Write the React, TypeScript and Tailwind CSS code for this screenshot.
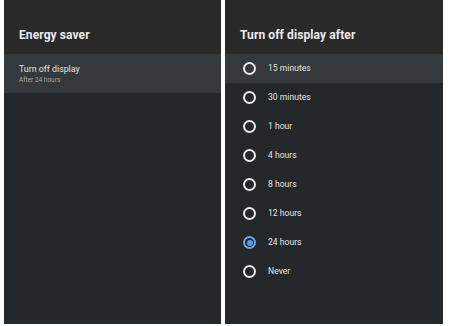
import React from "react";

const options = ["15 minutes", "30 minutes", "1 hour", "4 hours", "8 hours", "12 hours", "24 hours", "Never"];

function Radio({ checked }: { checked: boolean }) {
  if (checked) {
    return (
      <div className="w-[13px] h-[13px] rounded-full border-[2px] border-[#6aa8e4] flex items-center justify-center">
        <div className="w-[6px] h-[6px] rounded-full bg-[#5a9ee0]" />
      </div>
    );
  }
  return <div className="w-[13px] h-[13px] rounded-full border-[2px] border-[#e8e8e8]" />;
}

export default function App() {
  return (
    <div
      className="w-[453px] h-[326px] bg-white flex gap-[4px] pl-[4px] pb-[2px]"
      style={{ fontFamily: "Roboto, 'Noto Sans', sans-serif" }}
    >
      <div className="w-[217px] h-[324px] bg-[#25282b] flex flex-col">
        <div className="h-[54px] bg-[#292929] flex items-end pl-[15px] pb-[11px]">
          <span className="text-[12px] leading-[16px] font-bold text-[#ececec] tracking-[0.1px]">Energy saver</span>
        </div>
        <div className="h-[39px] bg-[#35393b] flex flex-col justify-center pl-[15px]">
          <span className="text-[8.8px] leading-[12px] text-[#e2e2e2]">Turn off display</span>
          <span className="text-[6.5px] leading-[10px] text-[#a4a6a8]">After 24 hours</span>
        </div>
        <div className="flex-1" />
      </div>
      <div className="w-[218px] h-[324px] bg-[#25282b] flex flex-col">
        <div className="h-[54px] bg-[#292929] flex items-end pl-[15px] pb-[11px]">
          <span className="text-[12px] leading-[16px] font-bold text-[#ececec] tracking-[0.1px]">Turn off display after</span>
        </div>
        {options.map((o, i) => (
          <div
            key={o}
            className={`h-[29px] flex items-center pl-[18px] gap-[12px] ${i === 0 ? "bg-[#35393b]" : ""}`}
          >
            <Radio checked={o === "24 hours"} />
            <span className="text-[8.6px] text-[#e2e2e2]">{o}</span>
          </div>
        ))}
        <div className="flex-1" />
      </div>
    </div>
  );
}
